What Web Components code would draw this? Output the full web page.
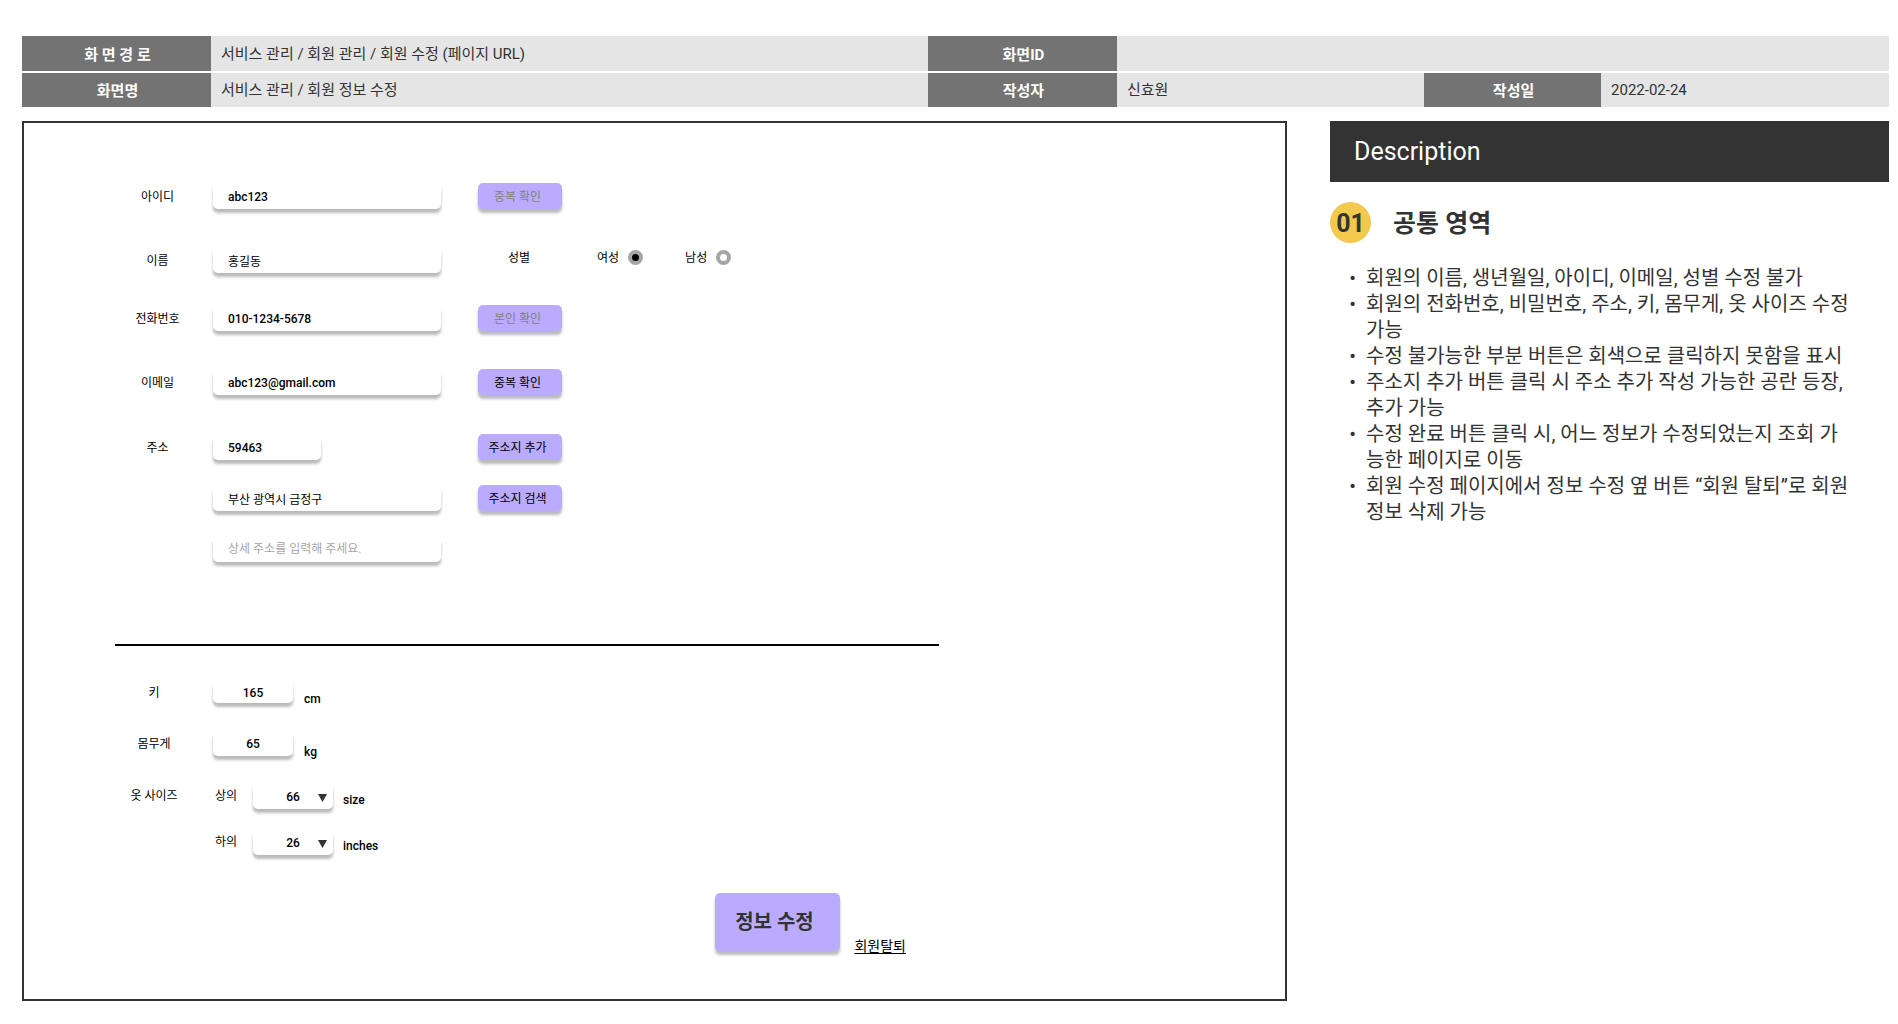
<!DOCTYPE html>
<html lang="ko">
<head>
<meta charset="utf-8">
<title>회원 정보 수정</title>
<style>
  body {
    margin: 0;
    padding: 36px 9px 23px 22px;
    background: #fff;
    color: #333;
    font-family: Roboto, "Noto Sans CJK KR", sans-serif;
  }
</style>
</head>
<body>
<spec-page>
  <spec-header slot="header"></spec-header>
  <member-form></member-form>
  <spec-description slot="aside" heading="Description" number="01" topic="공통 영역">
    <li>회원의 이름, 생년월일, 아이디, 이메일, 성별 수정 불가</li>
    <li>회원의 전화번호, 비밀번호, 주소, 키, 몸무게, 옷 사이즈 수정 가능</li>
    <li>수정 불가능한 부분 버튼은 회색으로 클릭하지 못함을 표시</li>
    <li>주소지 추가 버튼 클릭 시 주소 추가 작성 가능한 공란 등장, 추가 가능</li>
    <li>수정 완료 버튼 클릭 시, 어느 정보가 수정되었는지 조회 가능한 페이지로 이동</li>
    <li>회원 수정 페이지에서 정보 수정 옆 버튼 “회원 탈퇴”로 회원 정보 삭제 가능</li>
  </spec-description>
</spec-page>

<script>
const define = (name, render) => customElements.define(name, class extends HTMLElement {
  constructor() {
    super();
    this.attachShadow({ mode: 'open' });
  }
  connectedCallback() {
    this.shadowRoot.innerHTML = render(this);
  }
});
const attr = (el, name, fallback = '') => el.getAttribute(name) ?? fallback;

// Shared look of every raised box in the form.
const boxStyle = `
  .box {
    box-sizing: border-box;
    height: 26px;
    margin: 0;
    padding: 2px 0 0;
    border: 0;
    border-radius: 5px;
    background: #fff;
    box-shadow: 0 4px 3px rgba(0, 0, 0, .27);
    color: #000;
    font: 500 12px/16px Roboto, "Noto Sans CJK KR", sans-serif;
  }
`;

define('spec-page', () => `
  <style>
    :host { display: block; }
    .body { display: grid; grid-template-columns: 1265fr 559fr; column-gap: 43px; align-items: start; margin-top: 14px; }
    main { box-sizing: border-box; border: 2px solid #333; padding: 60px 91px 48px; min-width: 0; }
  </style>
  <slot name="header"></slot>
  <div class="body">
    <main><slot></slot></main>
    <slot name="aside"></slot>
  </div>
`);

define('spec-header', () => `
  <style>
    :host { display: block; }
    table { width: 100%; table-layout: fixed; border-collapse: separate; border-spacing: 0; font-size: 15px; line-height: 20px; }
    th, td { box-sizing: border-box; height: 35px; padding: 0; }
    th { padding: 2px 0 0 2px; background: #737373; color: #fff; font-weight: 700; text-align: center; }
    td { background: #e5e5e5; color: #333; text-align: left; padding-left: 10px; }
    tr:first-child > * { height: 36px; border-bottom: 1px solid #fff; }
    tr:last-child > td { padding-bottom: 1px; }
    tr:last-child > * { border-top: 1px solid #fff; }
    .label { width: 189px; }
    .date { width: 177px; }
    .path { width: 38.4%; }
    .author { width: 16.45%; }
  </style>
  <table>
    <colgroup><col class="label"><col class="path"><col class="label"><col class="author"><col class="date"><col></colgroup>
    <tr><th scope="row">화 면 경 로</th><td>서비스 관리 / 회원 관리 / 회원 수정 (페이지 URL)</td><th scope="row">화면ID</th><td colspan="3"></td></tr>
    <tr><th scope="row">화면명</th><td>서비스 관리 / 회원 정보 수정</td><th scope="row">작성자</th><td>신효원</td><th scope="row">작성일</th><td>2022-02-24</td></tr>
  </table>
`);

define('spec-description', el => `
  <style>
    :host { display: block; color: #333; }
    h2 { margin: 0; padding: 1px 24px 0; background: #333; color: #fff; font-size: 25px; font-weight: 400; line-height: 60px; }
    .topic { display: flex; align-items: center; gap: 22px; margin-top: 20px; }
    .badge { box-sizing: border-box; width: 41px; height: 41px; padding-top: 2px; border-radius: 50%; background: #f2c94c; font-size: 25px; font-weight: 700; line-height: 39px; text-align: center; }
    h3 { margin: 0; padding-top: 2px; font-size: 25px; line-height: 39px; font-weight: 700; }
    ul { margin: 22px 37px 0 0; padding: 0 0 0 36px; font-size: 20px; line-height: 26px; }
    ::slotted(li) { list-style-type: "•  "; }
  </style>
  <h2>${attr(el, 'heading')}</h2>
  <div class="topic"><span class="badge">${attr(el, 'number')}</span><h3>${attr(el, 'topic')}</h3></div>
  <ul><slot></slot></ul>
`);

define('form-field', el => {
  const label = attr(el, 'label');
  const value = attr(el, 'value');
  return `
  <style>
    :host { display: flex; align-items: center; gap: 37px; color: #000; font-size: 12px; line-height: 16px; }
    .field { display: flex; align-items: center; }
    label, .blank { flex: none; width: 84px; margin-right: 14px; padding: 2px 0 0 1px; box-sizing: border-box; text-align: center; }
    ${boxStyle}
    .box { width: 228px; padding: 2px 15px 0; }
    .short { width: 108px; margin-right: 120px; }
    .box:lang(ko) { padding-top: 0; font-weight: 400; }
    .box::placeholder { color: #a6a6a6; font-weight: 400; opacity: 1; }
  </style>
  <div class="field">
    ${label ? `<label for="f">${label}</label>` : '<span class="blank"></span>'}
    <input id="f" class="box ${attr(el, 'size')}" lang="${/^[\x21-\x7e]+$/.test(value) ? 'en' : 'ko'}" type="text" value="${value}" placeholder="${attr(el, 'placeholder')}" ${label ? '' : `aria-label="${attr(el, 'name')}"`}>
  </div>
  <slot></slot>`;
});

define('action-button', el => `
  <style>
    :host { display: block; }
    ${boxStyle}
    .box { width: 84px; padding: 1px 5px 0 0; background: #bbabff; font-weight: 400; text-align: center; white-space: nowrap; }
    .box:disabled { color: #828282; }
    .large { width: 125px; height: 58px; padding: 0 7px 0 0; color: #333; font-size: 20px; line-height: 26px; font-weight: 700; }
  </style>
  <button type="button" class="box ${attr(el, 'size')}" ${el.hasAttribute('disabled') ? 'disabled' : ''}><slot></slot></button>
`);

define('gender-choice', () => `
  <style>
    :host { display: block; align-self: flex-start; margin-left: -7px; white-space: nowrap; }
    fieldset { display: flex; align-items: center; margin: 0; padding: 0; border: 0; min-width: 0; height: 21px; }
    .name { width: 22px; margin: 0 67px 0 37px; }
    label { display: flex; align-items: center; gap: 9px; margin-right: 42px; }
    input { appearance: none; box-sizing: border-box; width: 15px; height: 15px; margin: 0; border: 4px solid #a6a6a6; border-radius: 50%; background: #fff; }
    input:checked { background: #000; }
  </style>
  <fieldset aria-labelledby="g">
    <span id="g" class="name">성별</span>
    <label>여성<input type="radio" name="gender" value="f" checked></label>
    <label>남성<input type="radio" name="gender" value="m"></label>
  </fieldset>
`);

define('measure-field', el => `
  <style>
    :host { display: flex; align-items: center; color: #000; font-size: 12px; line-height: 16px; }
    label { width: 78px; margin-right: 20px; padding-top: 1px; text-align: center; }
    ${boxStyle}
    .box { width: 80px; text-align: center; }
    .low { height: 22px; }
    .unit { align-self: flex-end; margin: 0 0 -4px 11px; font-weight: 500; }
  </style>
  <label for="f">${attr(el, 'label')}</label>
  <input id="f" class="box ${attr(el, 'size')}" type="text" value="${attr(el, 'value')}">
  <span class="unit">${attr(el, 'unit')}</span>
`);

define('size-select', el => `
  <style>
    :host { display: flex; align-items: center; color: #000; font-size: 12px; line-height: 16px; }
    .group { width: 78px; margin-right: 20px; text-align: center; }
    label { width: 24px; margin: 0 15px 0 1px; text-align: center; white-space: nowrap; }
    .stack { display: grid; }
    .stack > * { grid-area: 1 / 1; }
    ${boxStyle}
    .box { appearance: none; width: 80px; text-align: center; text-align-last: center; }
    svg { place-self: center end; margin: 4px 6px 0 0; pointer-events: none; }
    .unit { align-self: flex-end; margin: 0 0 1px 10px; font-weight: 500; }
  </style>
  <span class="group">${attr(el, 'group')}</span>
  <label for="s">${attr(el, 'label')}</label>
  <span class="stack">
    <select id="s" class="box"><option>${attr(el, 'value')}</option></select>
    <svg width="9" height="8" viewBox="0 0 9 8" aria-hidden="true"><path d="M0 0H9L4.500 8Z" fill="#333"/></svg>
  </span>
  <span class="unit">${attr(el, 'unit')}</span>
`);

define('member-form', () => `
  <style>
    :host { display: block; max-width: 824px; }
    .profile, .body-size { display: flex; flex-direction: column; }
    .profile { gap: 38px; }
    .group { display: flex; flex-direction: column; gap: 32px; }
    .address { gap: 25px; margin-top: 39px; }
    hr { height: 2px; margin: 82px 0 35px; border: 0; background: #000; }
    .body-size { gap: 27px; }
    .sizes { gap: 20px; }
    .actions { display: flex; justify-content: flex-end; align-items: flex-end; gap: 14px; margin: 38px 33px 0 0; }
    a { margin-bottom: -5px; color: #000; font-size: 14px; line-height: 20px; text-decoration: underline; text-underline-offset: 2px; }
  </style>
  <form>
    <div class="profile">
      <form-field label="아이디" value="abc123"><action-button disabled>중복 확인</action-button></form-field>
      <div class="group">
        <form-field label="이름" value="홍길동"><gender-choice></gender-choice></form-field>
        <form-field label="전화번호" value="010-1234-5678"><action-button disabled>본인 확인</action-button></form-field>
      </div>
      <form-field label="이메일" value="abc123@gmail.com"><action-button>중복 확인</action-button></form-field>
    </div>
    <div class="group address">
      <form-field label="주소" value="59463" size="short"><action-button>주소지 추가</action-button></form-field>
      <form-field name="기본 주소" value="부산 광역시 금정구"><action-button>주소지 검색</action-button></form-field>
      <form-field name="상세 주소" placeholder="상세 주소를 입력해 주세요."></form-field>
    </div>
    <hr>
    <div class="body-size">
      <measure-field label="키" value="165" unit="cm" size="low"></measure-field>
      <measure-field label="몸무게" value="65" unit="kg"></measure-field>
      <div class="group sizes">
        <size-select group="옷 사이즈" label="상의" value="66" unit="size"></size-select>
        <size-select label="하의" value="26" unit="inches"></size-select>
      </div>
    </div>
    <div class="actions">
      <action-button size="large">정보 수정</action-button>
      <a href="#withdraw">회원탈퇴</a>
    </div>
  </form>
`);
</script>
</body>
</html>
